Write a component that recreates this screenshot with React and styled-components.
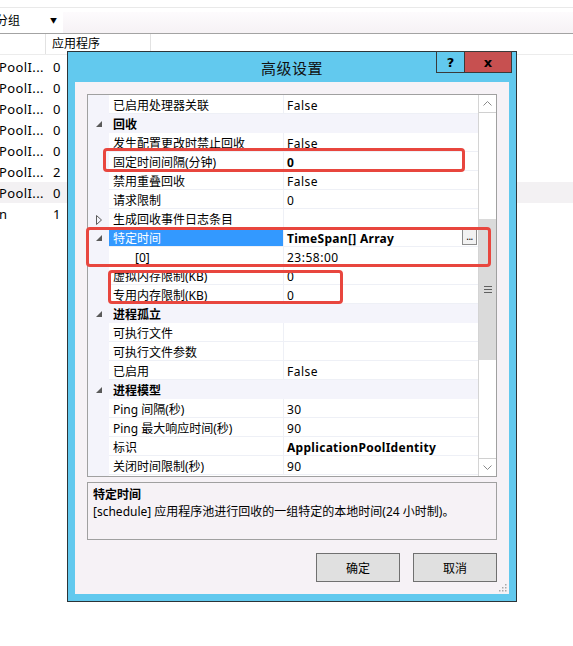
import React from 'react';
import styled, { createGlobalStyle } from 'styled-components';

const Global = createGlobalStyle`
  html, body { margin: 0; padding: 0; background: #fff; }
  body {
    font-family: "Noto Sans", "Noto Sans CJK SC", sans-serif;
    font-size: 12px;
    color: #000;
  }
`;

const FONT = `"Noto Sans", "Noto Sans CJK SC", sans-serif`;

const Page = styled.div`
  position: relative;
  width: 573px;
  height: 646px;
  overflow: hidden;
  background: #fff;
  font-family: ${FONT};
`;

/* ---------- background list ---------- */
const TopGap = styled.div`
  height: 7px;
  border-bottom: 1px solid #e9e9e9;
`;

const Toolbar = styled.div`
  height: 25px;
  display: flex;
  border-bottom: 1px solid #a3a3a3;
`;

const GroupLabel = styled.div`
  width: 63px;
  display: flex;
  align-items: center;
  justify-content: space-between;
  padding-right: 6px;
  box-sizing: border-box;
  line-height: 16px;
  span:first-child { margin-left: -4px; }
  span:last-child { font-size: 7px; margin-top: 1px; }
`;

const ToolFill = styled.div`
  flex: 1;
  margin-top: 4px;
  background: linear-gradient(#fdfbfd, #f6f2f5);
`;

const ListHeader = styled.div`
  height: 20px;
  display: flex;
  border-bottom: 1px solid #ececec;
`;

const HeadCell = styled.div`
  width: ${p => p.$w}px;
  box-sizing: border-box;
  border-right: 1px solid #e2e2e2;
  padding-left: 6px;
  line-height: 20px;
  white-space: nowrap;
`;

const ListBody = styled.div`
  padding-top: 1px;
`;

const ListRow = styled.div`
  height: 21px;
  display: flex;
  align-items: center;
  background: ${p => (p.$hl ? '#f3f1f3' : 'transparent')};
  font-size: 13px;
  letter-spacing: 0.4px;
`;

const ListName = styled.div`
  width: 54px;
  overflow: hidden;
  white-space: nowrap;
  margin-left: -1px;
`;

/* ---------- dialog ---------- */
const Dialog = styled.div`
  position: absolute;
  left: 67px;
  top: 51px;
  width: 450px;
  height: 551px;
  box-sizing: border-box;
  border: 1px solid #2c3438;
  background: #62c9ee;
  display: flex;
  flex-direction: column;
  padding: 0 7px 7px 7px;
`;

const TitleBar = styled.div`
  position: relative;
  height: 30px;
  margin: 0 -7px;
  display: flex;
  align-items: center;
  justify-content: center;
`;

const Title = styled.div`
  font-size: 15px;
  color: #111;
  letter-spacing: 0.5px;
  margin-top: 1px;
`;

const CaptionButtons = styled.div`
  position: absolute;
  top: -1px;
  right: 4px;
  height: 22px;
  display: flex;
  box-sizing: border-box;
  border: 1px solid #3a3a3a;
`;

const CapBtn = styled.div`
  width: ${p => p.$w}px;
  background: ${p => p.$bg};
  display: flex;
  align-items: center;
  justify-content: center;
  font-weight: 700;
  font-size: 13px;
  font-family: "DejaVu Sans", sans-serif;
  & + & { border-left: 1px solid #3a3a3a; }
`;

const Client = styled.div`
  position: relative;
  flex: 1;
  background: #f6f2f6;
  padding: 12px 12px 0 12px;
  display: flex;
  flex-direction: column;
`;

const Grid = styled.div`
  height: 383px;
  box-sizing: border-box;
  border: 1px solid #a0a0a0;
  background: #fff;
  display: flex;
`;

const Rows = styled.div`
  flex: 1;
  background: linear-gradient(to right, #f4f4fb 21px, #fff 21px);
`;

const Row = styled.div`
  height: 19px;
  display: flex;
  background: ${p => (p.$cat ? '#f4f4fb' : 'transparent')};
  line-height: 15px;
`;

const Gutter = styled.div`
  width: 21px;
  flex: none;
  display: flex;
  align-items: center;
  padding-left: 8px;
  padding-top: 2px;
  box-sizing: border-box;
`;

const NameCell = styled.div`
  width: ${p => (p.$cat ? 'auto' : '175px')};
  flex: ${p => (p.$cat ? '1' : 'none')};
  box-sizing: border-box;
  padding-left: ${p => (p.$indent ? 26 : 4)}px;
  padding-top: 3px;
  border-bottom: 1px solid ${p => (p.$cat ? '#f4f4fb' : '#eef0f6')};
  border-right: ${p => (p.$cat ? 'none' : '1px solid #eef0f6')};
  background: ${p => (p.$sel ? '#3399ff' : 'transparent')};
  color: ${p => (p.$sel ? '#fff' : '#000')};
  font-weight: ${p => (p.$cat ? 700 : 400)};
  white-space: nowrap;
`;

const ValueCell = styled.div`
  flex: 1;
  display: flex;
  align-items: flex-start;
  justify-content: space-between;
  padding-left: 3px;
  border-bottom: 1px solid #eef0f6;
  font-weight: ${p => (p.$bold ? 700 : 400)};
  letter-spacing: ${p => (p.$bold ? '0.3px' : '0.5px')};
  white-space: nowrap;
  span { padding-top: 3px; }
`;

const DotsBtn = styled.div`
  width: 15px;
  height: 16px;
  margin-right: 1px;
  margin-top: 1px;
  box-sizing: border-box;
  border: 1px solid #8c8c8c;
  background: #f2f2f2;
  font-weight: 400;
  font-size: 10px;
  line-height: 12px;
  text-align: center;
  letter-spacing: -0.5px;
`;

const ScrollBar = styled.div`
  width: 17px;
  flex: none;
  border-left: 1px solid #d4d4d4;
  background: #fff;
  display: flex;
  flex-direction: column;
`;

const ArrowBtn = styled.div`
  height: 17px;
  flex: none;
  display: flex;
  align-items: center;
  justify-content: center;
  border-${p => (p.$up ? 'bottom' : 'top')}: 1px solid #d0d0d0;
`;

const Track = styled.div`
  flex: 1;
  padding-top: 106px;
`;

const Thumb = styled.div`
  height: 141px;
  background: #dadada;
  display: flex;
  align-items: center;
  justify-content: center;
`;

const Desc = styled.div`
  margin-top: 5px;
  height: 58px;
  box-sizing: border-box;
  border: 1px solid #a0a0a0;
  padding: 3px 0 0 5px;
  line-height: 17px;
`;

const DescTitle = styled.div`
  font-weight: 700;
`;

const DescText = styled.div`
  letter-spacing: 0;
`;

const Buttons = styled.div`
  margin-top: 13px;
  display: flex;
  justify-content: flex-end;
  gap: 13px;
`;

const Button = styled.div`
  width: 84px;
  height: 29px;
  box-sizing: border-box;
  border: 1px solid #707070;
  background: #e0e0e0;
  display: flex;
  align-items: center;
  justify-content: center;
  font-size: 12px;
`;

const Grip = styled.svg`
  position: absolute;
  right: 2px;
  bottom: 2px;
`;

const Mark = styled.div`
  position: absolute;
  left: ${p => p.$x}px;
  top: ${p => p.$y}px;
  width: ${p => p.$w}px;
  height: ${p => p.$h}px;
  box-sizing: border-box;
  border: 3px solid #e8463e;
  border-radius: 4px;
`;

const Expanded = () => (
  <svg width="7" height="7" viewBox="0 0 7 7">
    <polygon points="6,0 6,6 0,6" fill="#5a5a5a" />
  </svg>
);

const Collapsed = () => (
  <svg width="6" height="10" viewBox="0 0 6 10">
    <polygon points="0.5,0.5 5.5,5 0.5,9.5" fill="none" stroke="#5a5a5a" strokeWidth="1" />
  </svg>
);

const rows = [
  { name: '已启用处理器关联', value: 'False' },
  { cat: true, name: '回收' },
  { name: '发生配置更改时禁止回收', value: 'False' },
  { name: '固定时间间隔(分钟)', value: '0', bold: true },
  { name: '禁用重叠回收', value: 'False' },
  { name: '请求限制', value: '0' },
  { name: '生成回收事件日志条目', value: '', collapsed: true },
  { name: '特定时间', value: 'TimeSpan[] Array', bold: true, sel: true, expanded: true, dots: true },
  { name: '[0]', value: '23:58:00', indent: true },
  { name: '虚拟内存限制(KB)', value: '0' },
  { name: '专用内存限制(KB)', value: '0' },
  { cat: true, name: '进程孤立' },
  { name: '可执行文件', value: '' },
  { name: '可执行文件参数', value: '' },
  { name: '已启用', value: 'False' },
  { cat: true, name: '进程模型' },
  { name: 'Ping 间隔(秒)', value: '30' },
  { name: 'Ping 最大响应时间(秒)', value: '90' },
  { name: '标识', value: 'ApplicationPoolIdentity', bold: true },
  { name: '关闭时间限制(秒)', value: '90' },
];

const listRows = [
  ['PoolI...', '0'], ['PoolI...', '0'], ['PoolI...', '0'], ['PoolI...', '0'],
  ['PoolI...', '0'], ['PoolI...', '2'], ['PoolI...', '0', true], ['n', '1'],
];

export default function App() {
  return (
    <Page>
      <Global />
      <TopGap />
      <Toolbar>
        <GroupLabel><span>分组</span><span>▼</span></GroupLabel>
        <ToolFill />
      </Toolbar>
      <ListHeader>
        <HeadCell $w={46} />
        <HeadCell $w={105}>应用程序</HeadCell>
      </ListHeader>
      <ListBody>
        {listRows.map(([n, v, hl], i) => (
          <ListRow key={i} $hl={hl}>
            <ListName>{n}</ListName>
            <span>{v}</span>
          </ListRow>
        ))}
      </ListBody>

      <Dialog>
        <TitleBar>
          <Title>高级设置</Title>
          <CaptionButtons>
            <CapBtn $w={27} $bg="#62c9ee">?</CapBtn>
            <CapBtn $w={46} $bg="#c75050">x</CapBtn>
          </CaptionButtons>
        </TitleBar>
        <Client>
          <Grid>
            <Rows>
              {rows.map((r, i) => (
                <Row key={i} $cat={r.cat}>
                  <Gutter>
                    {(r.cat || r.expanded) && <Expanded />}
                    {r.collapsed && <Collapsed />}
                  </Gutter>
                  <NameCell $cat={r.cat} $sel={r.sel} $indent={r.indent}>{r.name}</NameCell>
                  {!r.cat && (
                    <ValueCell $bold={r.bold}>
                      <span>{r.value}</span>
                      {r.dots && <DotsBtn>...</DotsBtn>}
                    </ValueCell>
                  )}
                </Row>
              ))}
            </Rows>
            <ScrollBar>
              <ArrowBtn $up>
                <svg width="9" height="5" viewBox="0 0 9 5">
                  <polyline points="0.5,4.5 4.5,0.5 8.5,4.5" fill="none" stroke="#8a8a8a" />
                </svg>
              </ArrowBtn>
              <Track>
                <Thumb>
                  <svg width="8" height="7" viewBox="0 0 8 7">
                    <rect x="0" y="0" width="8" height="1" fill="#606060" />
                    <rect x="0" y="3" width="8" height="1" fill="#606060" />
                    <rect x="0" y="6" width="8" height="1" fill="#606060" />
                  </svg>
                </Thumb>
              </Track>
              <ArrowBtn>
                <svg width="9" height="5" viewBox="0 0 9 5">
                  <polyline points="0.5,0.5 4.5,4.5 8.5,0.5" fill="none" stroke="#8a8a8a" />
                </svg>
              </ArrowBtn>
            </ScrollBar>
          </Grid>
          <Desc>
            <DescTitle>特定时间</DescTitle>
            <DescText>[schedule] 应用程序池进行回收的一组特定的本地时间(24 小时制)。</DescText>
          </Desc>
          <Buttons>
            <Button>确定</Button>
            <Button>取消</Button>
          </Buttons>
          <Grip width="9" height="9" viewBox="0 0 9 9">
            {[[7, 1], [4, 4], [7, 4], [1, 7], [4, 7], [7, 7]].map(([x, y], i) => (
              <rect key={i} x={x} y={y} width="1.5" height="1.5" fill="#a8a8a8" />
            ))}
          </Grip>
        </Client>
      </Dialog>

      <Mark $x={103} $y={148} $w={362} $h={24} />
      <Mark $x={86} $y={227} $w={405} $h={40} />
      <Mark $x={108} $y={270} $w={235} $h={34} />
    </Page>
  );
}
